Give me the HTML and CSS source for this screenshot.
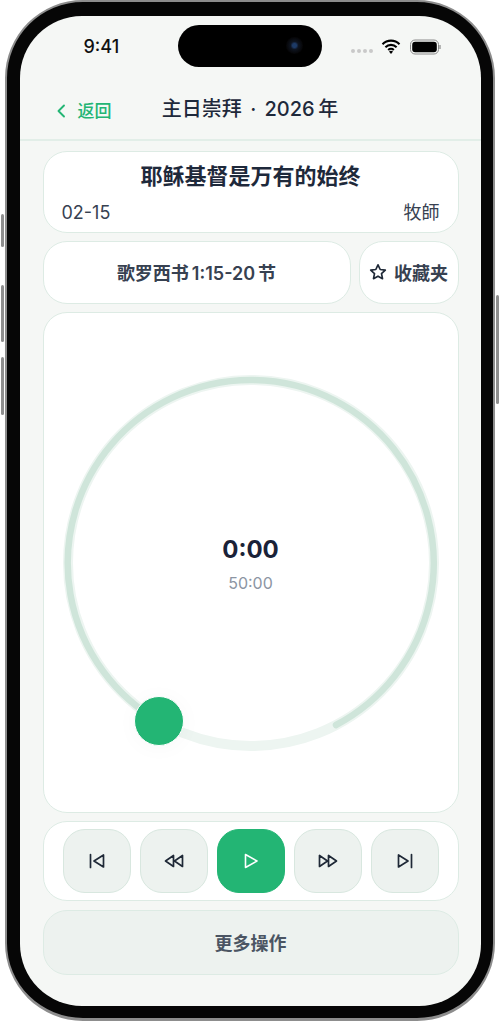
FILE: index.html
```html
<!DOCTYPE html>
<html lang="zh-CN">
<head>
<meta charset="utf-8">
<title>主日崇拜</title>
<link rel="stylesheet" href="styles.css">
</head>
<body>
<div class="phone">
  <span class="side side-a"></span><span class="side side-b"></span><span class="side side-c"></span><span class="side side-d"></span>
  <div class="screen">
    <div class="status">
      <span class="clock">9:41</span>
      <div class="island"><span class="lens"></span></div>
      <div class="indicators">
        <span class="dots"><i></i><i></i><i></i><i></i></span>
        <svg class="wifi" width="20" height="15" viewBox="0 0 20 15"><path d="M1.5 5.2a12 12 0 0 1 17 0M4.4 8.2a8 8 0 0 1 11.2 0M7.2 11a4 4 0 0 1 5.6 0" fill="none" stroke="#000" stroke-width="2.1"/><path d="M10 15l-2-2.4a3 3 0 0 1 4 0z" fill="#000"/></svg>
        <svg class="battery" width="32" height="16" viewBox="0 0 32 16"><rect x=".5" y="1" width="28" height="14" rx="4.5" fill="none" stroke="#8a8a8a"/><rect x="2.2" y="2.7" width="24.6" height="10.6" rx="3" fill="#000"/><path d="M30 6v4" stroke="#8a8a8a" stroke-width="1.2"/></svg>
      </div>
    </div>
    <header class="nav">
      <a class="back"><svg width="10" height="14" viewBox="0 0 10 14"><path d="M8 1.500L2.500 7 8 12.500" fill="none" stroke="#23b574" stroke-width="1.900" stroke-linecap="round" stroke-linejoin="round"/></svg><span>返回</span></a>
      <h1 class="nav-title">主日崇拜 · 2026&#8201;年</h1>
    </header>
    <main class="content">
      <section class="card info">
        <h2 class="sermon">耶稣基督是万有的始终</h2>
        <div class="meta"><span>02-15</span><span>牧師</span></div>
      </section>
      <div class="refs">
        <div class="card verse">歌罗西书&#8201;1:15-20&#8201;节</div>
        <div class="card fav">
          <svg width="18" height="18" viewBox="0 0 18 18"><path d="M9 1.800l2.200 4.700 5.100.6-3.800 3.500 1 5.100L9 13.200l-4.500 2.500 1-5.100L1.700 7.100l5.100-.6z" fill="none" stroke="#1f2937" stroke-width="1.700" stroke-linejoin="round"/></svg>
          <span>收藏夹</span>
        </div>
      </div>
      <section class="card dial-card">
        <div class="dial">
          <svg width="380" height="380" viewBox="0 0 380 380">
            <circle cx="190" cy="190" r="183" fill="none" stroke="#edf5f1" stroke-width="10"/>
            <circle cx="190" cy="190" r="183" fill="none" stroke="#edf5f1" stroke-width="8"/>
            <path d="M99 349 A183 183 0 1 1 275 352" fill="none" stroke="#cfe5da" stroke-width="6.500" stroke-linecap="round"/>
          </svg>
          <span class="thumb"></span>
          <div class="time"><strong>0:00</strong><span>50:00</span></div>
        </div>
      </section>
      <section class="card controls">
        <button class="ctl"><svg width="20" height="20" viewBox="0 0 20 20"><path d="M3.500 3.500v13M16.500 4v12L7 10z" fill="none" stroke="#1f2937" stroke-width="1.700" stroke-linejoin="round" stroke-linecap="round"/></svg></button>
        <button class="ctl"><svg width="22" height="20" viewBox="0 0 22 20"><path d="M10.500 4.500v11L2.500 10zM19.500 4.500v11L11.500 10z" fill="none" stroke="#1f2937" stroke-width="1.700" stroke-linejoin="round"/></svg></button>
        <button class="ctl play"><svg width="20" height="20" viewBox="0 0 20 20"><path d="M4.500 3.500v13L16 10z" fill="none" stroke="#fff" stroke-width="1.600" stroke-linejoin="round"/></svg></button>
        <button class="ctl"><svg width="22" height="20" viewBox="0 0 22 20"><path d="M2.500 4.500v11l8-5.500zM11.500 4.500v11l8-5.500z" fill="none" stroke="#1f2937" stroke-width="1.700" stroke-linejoin="round"/></svg></button>
        <button class="ctl"><svg width="20" height="20" viewBox="0 0 20 20"><path d="M16.500 3.500v13M3.500 4v12L13 10z" fill="none" stroke="#1f2937" stroke-width="1.700" stroke-linejoin="round" stroke-linecap="round"/></svg></button>
      </section>
      <button class="more">更多操作</button>
    </main>
  </div>
</div>
</body>
</html>
```
FILE: styles.css
```css
* { box-sizing: border-box; }
html, body { margin: 0; height: 100%; background: #fff; }
body {
  font-family: Inter, "Noto Sans CJK SC", sans-serif;
  color: #1e293b;
  overflow: hidden;
}
.phone {
  position: relative;
  width: 490px;
  height: 1021px;
  margin: 0 0 0 5px;
  background: #060606;
  border-radius: 78px;
  border: 2.500px solid #8d8d8d;
  border-bottom-width: 3px;
  padding: 13.500px 12.500px 12px;
}
.side { position: absolute; width: 3px; background: #8e8e8e; border-radius: 1.500px; }
.side-a { left: -6px; top: 212px; height: 33px; }
.side-b { left: -6px; top: 283px; height: 57px; }
.side-c { left: -6px; top: 355px; height: 58px; }
.side-d { right: -6px; top: 293px; height: 109px; }
.screen {
  height: 990px;
  background: #f5f7f5;
  border-radius: 62px;
  overflow: hidden;
  display: flex;
  flex-direction: column;
}
.status {
  position: relative;
  height: 60px;
  flex: none;
}
.clock {
  position: absolute;
  left: 64px;
  top: 20px;
  font-size: 18px;
  font-weight: 500;
  line-height: 22px;
  color: #111;
}
.island {
  position: absolute;
  left: 158px;
  top: 9px;
  width: 144px;
  height: 42px;
  background: #000;
  border-radius: 21px;
}
.lens {
  position: absolute;
  right: 19px;
  top: 12px;
  width: 17px;
  height: 17px;
  border-radius: 50%;
  background: radial-gradient(circle, #1d3a66 0 2px, #0e1420 4px, #060608 8px);
}
.indicators {
  position: absolute;
  left: 331px;
  top: 23px;
  display: flex;
  align-items: center;
  gap: 8px;
}
.dots { display: flex; gap: 2px; margin-top: 9px; }
.dots i { width: 4px; height: 4px; border-radius: 50%; background: #c9c9c9; }
.battery { margin-left: 1px; }
.nav {
  position: relative;
  height: 65px;
  flex: none;
  display: flex;
  align-items: center;
  justify-content: center;
  border-bottom: 2px solid #e2eee8;
}
.back {
  position: absolute;
  left: 36px;
  top: 24px;
  display: flex;
  align-items: center;
  gap: 12px;
  font-size: 17px;
  line-height: 22px;
  font-weight: 500;
  color: #23b574;
}
.nav-title { margin: 0; font-size: 20px; font-weight: 500; word-spacing: 3px; color: #1e293b; }
.content {
  flex: 1;
  display: flex;
  flex-direction: column;
  gap: 8px;
  padding: 10px 22px 31px 23px;
}
.card {
  background: #fff;
  border: 1.500px solid #ddebe4;
  border-radius: 24px;
}
.info { height: 82px; padding: 9px 18px 0; }
.sermon { margin: 0; text-align: center; font-size: 22px; line-height: 30px; font-weight: 700; color: #1e293b; }
.meta { display: flex; justify-content: space-between; margin-top: 10px; font-size: 18px; line-height: 24px; color: #374151; }
.refs { display: flex; gap: 8px; height: 63px; flex: none; }
.verse {
  flex: 1;
  display: flex;
  align-items: center;
  justify-content: center;
  font-size: 18px;
  font-weight: 600;
  color: #374151;
}
.fav {
  width: 100px;
  display: flex;
  align-items: center;
  justify-content: center;
  gap: 7px;
  font-size: 18px;
  font-weight: 600;
  color: #374151;
}
.dial-card {
  flex: 1;
  display: flex;
  align-items: center;
  justify-content: center;
  border-width: 1px;
}
.dial { position: relative; width: 380px; height: 380px; margin-top: 2px; }
.dial svg { display: block; }
.thumb {
  position: absolute;
  left: 73.800px;
  top: 323px;
  width: 50px;
  height: 50px;
  border-radius: 50%;
  background: #23b574;
  border: 1.500px solid #fff;
  box-shadow: 0 2px 22px rgba(0, 0, 0, .03);
}
.time {
  position: absolute;
  left: 0;
  right: 0;
  top: 161.500px;
  display: flex;
  flex-direction: column;
  align-items: center;
}
.time strong { font-size: 24px; line-height: 30px; font-weight: 700; color: #1a2238; }
.time span { margin-top: 9px; font-size: 16px; line-height: 18px; color: #8c95a3; }
.controls {
  height: 80px;
  flex: none;
  display: flex;
  align-items: center;
  justify-content: center;
  gap: 9px;
}
.ctl {
  width: 68px;
  height: 64px;
  padding: 0;
  display: flex;
  align-items: center;
  justify-content: center;
  background: #edf2ef;
  border: 1.500px solid #d8e7df;
  border-radius: 22px;
}
.play { background: #23b574; border-color: #23b574; }
.more {
  height: 65px;
  flex: none;
  margin-top: 1px;
  background: #edf2ef;
  border: 1.500px solid #ddebe4;
  border-radius: 24px;
  font-family: inherit;
  font-size: 18px;
  font-weight: 600;
  color: #4b5563;
}
```
